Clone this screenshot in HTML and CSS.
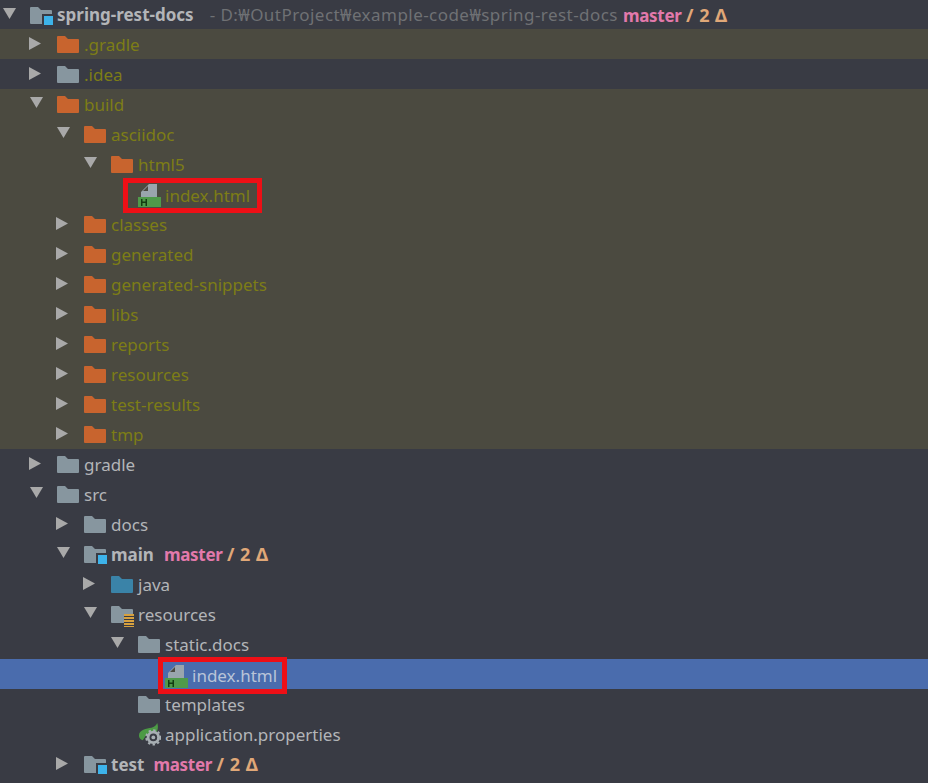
FILE: index.html
```html
<!DOCTYPE html>
<html lang="en">
<head>
<meta charset="utf-8">
<title>Project tree</title>
<link rel="stylesheet" href="styles.css">
</head>
<body>
<svg class="defs" width="0" height="0" aria-hidden="true">
  <defs>
    <path id="folder" d="M0 3a1 1 0 0 1 1-1h7l3 3h10a1 1 0 0 1 1 1v12a1 1 0 0 1-1 1H1a1 1 0 0 1-1-1z"/>
    <symbol id="open" viewBox="0 0 14 14"><path d="M0 0h13L6.500 11z"/></symbol>
    <symbol id="closed" viewBox="1 0 14 14" overflow="visible"><path d="M0 0l12 6.500L0 13z"/></symbol>
    <symbol id="html" viewBox="0 0 23 23">
      <path class="page" d="M3 8l8-8h8v13H3z"/>
      <path class="fold" d="M5 7l5-5v5z"/>
      <rect class="band" y="13" width="23" height="10"/>
      <path class="letter" d="M3 15h1.500v2.500h3V15H9v7H7.500v-3h-3v3H3z"/>
    </symbol>
    <symbol id="leaf" viewBox="0 0 24 24">
      <path class="leafshape" d="M1 13C1 7 9 6 14 5c3-1 5-2 6-5 2 5 0 10-3 12H9l-4 6C2 17 1 15 1 13z"/>
      <circle class="gear" cx="16" cy="15" r="7"/>
      <circle class="teeth" cx="16" cy="15" r="7.500"/>
      <circle class="gearhole" cx="16" cy="15" r="4"/>
      <circle class="gear" cx="16" cy="15" r="2"/>
    </symbol>
  </defs>
</svg>
<ul class="tree">
  <li class="row root"><svg class="arrow"><use href="#open"/></svg><span class="ico"><svg class="fld grey" viewBox="0 0 22 20"><use href="#folder"/></svg><i class="mod"></i></span><b class="name">spring-rest-docs</b><span class="path">- D:₩OutProject₩example-code₩spring-rest-docs</span><span class="vcs"><b class="branch">master</b> <b class="delta">/ 2 Δ</b></span></li>
  <li class="row ex d1"><svg class="arrow"><use href="#closed"/></svg><span class="ico"><svg class="fld orange" viewBox="0 0 22 20"><use href="#folder"/></svg></span><span class="name">.gradle</span></li>
  <li class="row d1 ol"><svg class="arrow"><use href="#closed"/></svg><span class="ico"><svg class="fld grey" viewBox="0 0 22 20"><use href="#folder"/></svg></span><span class="name">.idea</span></li>
  <li class="row ex d1"><svg class="arrow"><use href="#open"/></svg><span class="ico"><svg class="fld orange" viewBox="0 0 22 20"><use href="#folder"/></svg></span><span class="name">build</span></li>
  <li class="row ex d2"><svg class="arrow"><use href="#open"/></svg><span class="ico"><svg class="fld orange" viewBox="0 0 22 20"><use href="#folder"/></svg></span><span class="name">asciidoc</span></li>
  <li class="row ex d3"><svg class="arrow"><use href="#open"/></svg><span class="ico"><svg class="fld orange" viewBox="0 0 22 20"><use href="#folder"/></svg></span><span class="name">html5</span></li>
  <li class="row ex d4 leaf"><span class="mark mark-a"><span class="ico"><svg class="file"><use href="#html"/></svg></span><span class="name">index.html</span></span></li>
  <li class="row ex d2"><svg class="arrow"><use href="#closed"/></svg><span class="ico"><svg class="fld orange" viewBox="0 0 22 20"><use href="#folder"/></svg></span><span class="name">classes</span></li>
  <li class="row ex d2"><svg class="arrow"><use href="#closed"/></svg><span class="ico"><svg class="fld orange" viewBox="0 0 22 20"><use href="#folder"/></svg></span><span class="name">generated</span></li>
  <li class="row ex d2"><svg class="arrow"><use href="#closed"/></svg><span class="ico"><svg class="fld orange" viewBox="0 0 22 20"><use href="#folder"/></svg></span><span class="name">generated-snippets</span></li>
  <li class="row ex d2"><svg class="arrow"><use href="#closed"/></svg><span class="ico"><svg class="fld orange" viewBox="0 0 22 20"><use href="#folder"/></svg></span><span class="name">libs</span></li>
  <li class="row ex d2"><svg class="arrow"><use href="#closed"/></svg><span class="ico"><svg class="fld orange" viewBox="0 0 22 20"><use href="#folder"/></svg></span><span class="name">reports</span></li>
  <li class="row ex d2"><svg class="arrow"><use href="#closed"/></svg><span class="ico"><svg class="fld orange" viewBox="0 0 22 20"><use href="#folder"/></svg></span><span class="name">resources</span></li>
  <li class="row ex d2"><svg class="arrow"><use href="#closed"/></svg><span class="ico"><svg class="fld orange" viewBox="0 0 22 20"><use href="#folder"/></svg></span><span class="name">test-results</span></li>
  <li class="row ex d2"><svg class="arrow"><use href="#closed"/></svg><span class="ico"><svg class="fld orange" viewBox="0 0 22 20"><use href="#folder"/></svg></span><span class="name">tmp</span></li>
  <li class="row d1"><svg class="arrow"><use href="#closed"/></svg><span class="ico"><svg class="fld grey" viewBox="0 0 22 20"><use href="#folder"/></svg></span><span class="name">gradle</span></li>
  <li class="row d1"><svg class="arrow"><use href="#open"/></svg><span class="ico"><svg class="fld grey" viewBox="0 0 22 20"><use href="#folder"/></svg></span><span class="name">src</span></li>
  <li class="row d2"><svg class="arrow"><use href="#closed"/></svg><span class="ico"><svg class="fld grey" viewBox="0 0 22 20"><use href="#folder"/></svg></span><span class="name">docs</span></li>
  <li class="row d2"><svg class="arrow"><use href="#open"/></svg><span class="ico"><svg class="fld grey" viewBox="0 0 22 20"><use href="#folder"/></svg><i class="mod"></i></span><b class="name">main</b><span class="vcs gap"><b class="branch">master</b> <b class="delta">/ 2 Δ</b></span></li>
  <li class="row d3"><svg class="arrow"><use href="#closed"/></svg><span class="ico"><svg class="fld blue" viewBox="0 0 22 20"><use href="#folder"/></svg></span><span class="name">java</span></li>
  <li class="row d3"><svg class="arrow"><use href="#open"/></svg><span class="ico"><svg class="fld grey" viewBox="0 0 22 20"><use href="#folder"/></svg><i class="stack"></i></span><span class="name">resources</span></li>
  <li class="row d4"><svg class="arrow"><use href="#open"/></svg><span class="ico"><svg class="fld grey" viewBox="0 0 22 20"><use href="#folder"/></svg></span><span class="name">static.docs</span></li>
  <li class="row sel d5 leaf"><span class="mark mark-b"><span class="ico"><svg class="file"><use href="#html"/></svg></span><span class="name">index.html</span></span></li>
  <li class="row d4 leaf"><span class="ico"><svg class="fld grey" viewBox="0 0 22 20"><use href="#folder"/></svg></span><span class="name">templates</span></li>
  <li class="row d4 leaf"><span class="ico"><svg class="file"><use href="#leaf"/></svg></span><span class="name">application.properties</span></li>
  <li class="row d2"><svg class="arrow"><use href="#closed"/></svg><span class="ico"><svg class="fld grey" viewBox="0 0 22 20"><use href="#folder"/></svg><i class="mod"></i></span><b class="name">test</b><span class="vcs gap2"><b class="branch">master</b> <b class="delta">/ 2 Δ</b></span></li>
</ul>
</body>
</html>
```
FILE: styles.css
```css
html, body {
  margin: 0;
  height: 100%;
  overflow: hidden;
  background: #393b44;
}
.defs { position: absolute; }
.tree {
  list-style: none;
  margin: 0;
  padding: 0;
  font-family: "Noto Sans", "Open Sans", sans-serif;
  font-size: 17px;
  color: #b3b5b8;
}
.row {
  display: flex;
  align-items: center;
  height: 30px;
  white-space: nowrap;
}
.root { height: 29px; padding-left: 3px; }
.d1 { padding-left: 30px; }
.d2 { padding-left: 57px; }
.d3 { padding-left: 84px; }
.d4 { padding-left: 111px; }
.d5 { padding-left: 138px; }
.leaf.d4 { padding-left: 138px; }
.leaf.d5 { padding-left: 165px; }
.ex { background: #4b4a40; color: #7d7d16; }
.ol { color: #7d7d16; }
.sel { background: #4a6cad; color: #b9c4d8; }
.arrow {
  width: 14px;
  height: 14px;
  margin-right: 13px;
  fill: #a9a9a9;
  flex: none;
  overflow: visible;
}
.ico {
  position: relative;
  display: block;
  width: 22px;
  height: 20px;
  margin-right: 5px;
  flex: none;
}
.fld { display: block; width: 22px; height: 20px; }
.file { display: block; width: 23px; height: 23px; margin-top: -1px; }
.grey { fill: #87969f; }
.orange { fill: #c8642e; }
.blue { fill: #3a83a8; }
.page { fill: #9aa5ad; }
.fold { fill: #4b4a40; }
.sel .fold { fill: #4a6cad; }
.band { fill: #4f9a4a; }
.letter { fill: #123d12; }
.leafshape { fill: #4c9a45; }
.gear { fill: #a8afb4; }
.teeth { fill: none; stroke: #a8afb4; stroke-width: 2; stroke-dasharray: 2.500 2.500; }
.gearhole { fill: #393b44; }
.mod {
  position: absolute;
  right: -3px;
  bottom: -2px;
  width: 9px;
  height: 9px;
  background: #3db3ea;
  border: 2px solid #393b44;
}
.stack {
  position: absolute;
  right: -1px;
  bottom: -3px;
  width: 10px;
  height: 13px;
  background: repeating-linear-gradient(#d7a13f 0 2px, #393b44 2px 3px);
}
.mark {
  display: flex;
  align-items: center;
  outline: 5px solid #ee0f16;
}
.mark-a {
  height: 25px;
  margin: 2px 0 0 -10px;
  padding: 0 7px 0 10px;
}
.mark-b {
  height: 27px;
  margin: 3px 0 0 -2px;
  padding: 0 5px 0 2px;
}
.name { font-weight: 400; }
b.name { font-weight: 700; }
.path { color: #6f7174; margin-left: 16px; letter-spacing: 0.45px; }
.vcs { margin-left: 5px; }
.gap { margin-left: 10px; }
.gap2 { margin-left: 9px; }
.branch { color: #e279ab; letter-spacing: -0.3px; }
.delta { color: #e0a878; font-size: 18px; word-spacing: 1px; }
```
